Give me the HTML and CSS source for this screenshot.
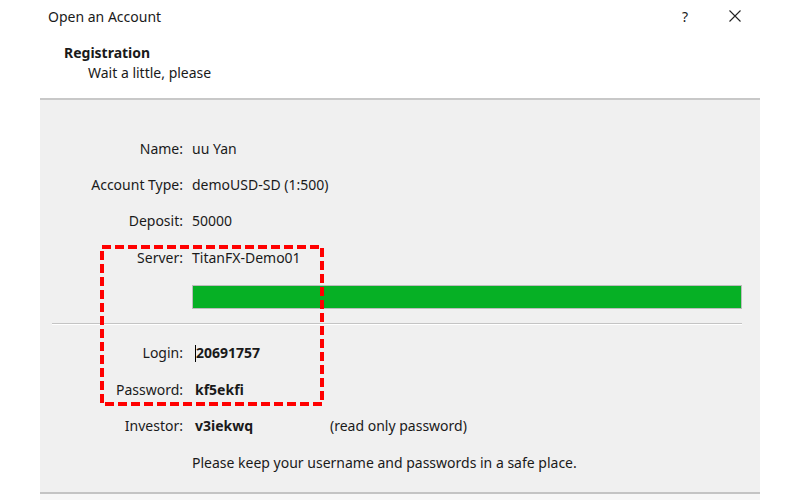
FILE: index.html
```html
<!DOCTYPE html>
<html>
<head>
<meta charset="utf-8">
<link rel="stylesheet" href="styles.css">
</head>
<body>
<div class="titlebar">
  <span class="title">Open an Account</span>
  <span class="tbtn help">?</span>
  <span class="tbtn close">
    <svg width="14" height="14" viewBox="0 0 14 14"><path d="M1.5 1.5 L12.5 12.5 M12.5 1.5 L1.5 12.5" stroke="#222" stroke-width="1.1" fill="none"/></svg>
  </span>
</div>
<div class="header">
  <div class="h-title">Registration</div>
  <div class="h-sub">Wait a little, please</div>
</div>
<div class="panel">
  <div class="grid">
    <div class="lbl">Name:</div><div class="val">uu Yan</div>
    <div class="lbl">Account Type:</div><div class="val">demoUSD-SD (1:500)</div>
    <div class="lbl">Deposit:</div><div class="val">50000</div>
    <div class="lbl">Server:</div><div class="val">TitanFX-Demo01</div>
  </div>
  <div class="progress"><div class="fill"></div></div>
  <div class="sep"></div>
  <div class="grid grid2">
    <div class="lbl">Login:</div><div class="val b"><span class="caret"></span>20691757</div>
    <div class="lbl">Password:</div><div class="val b pw">kf5ekfi</div>
    <div class="lbl">Investor:</div><div class="val inv"><span class="b">v3iekwq</span><span class="ro">(read only password)</span></div>
    <div class="lbl"></div><div class="val">Please keep your username and passwords in a safe place.</div>
  </div>
</div>
<div class="footer"></div>
<svg class="highlight" width="224" height="161" viewBox="0 0 224 161">
  <rect x="2" y="2" width="220" height="157" fill="none" stroke="#ff0000" stroke-width="4" stroke-dasharray="9 4"/>
</svg>
</body>
</html>
```
FILE: styles.css
```css
html, body {
  margin: 0;
  padding: 0;
  background: #ffffff;
  width: 800px;
  height: 500px;
  overflow: hidden;
}
body {
  font-family: "Noto Sans", "Open Sans", sans-serif;
  font-size: 14px;
  color: #1a1a1a;
  position: relative;
}
.titlebar {
  height: 32px;
  display: flex;
  align-items: center;
  padding-left: 48px;
}
.title { flex: 1; }
.tbtn {
  width: 50px;
  display: flex;
  justify-content: center;
  align-items: center;
}
.help { font-size: 14px; }
.close { margin-right: 40px; }
.header {
  height: 66px;
  padding-left: 64px;
  box-sizing: border-box;
  padding-top: 11px;
}
.h-title { font-weight: bold; line-height: 20px; }
.h-sub { padding-left: 24px; line-height: 20px; }
.panel {
  margin: 0 40px;
  background: #f0f0f0;
  border-top: 2px solid #c8c8c8;
  border-bottom: 2px solid #c4c4c4;
  height: 396px;
  box-sizing: border-box;
  padding-top: 30px;
}
.grid {
  display: grid;
  grid-template-columns: 143px 1fr;
  column-gap: 9px;
  grid-auto-rows: 36.3px;
  align-items: center;
}
.grid2 { grid-auto-rows: 36.7px; }
.lbl { text-align: right; }
.b { font-weight: bold; }
.val.b, .pw { padding-left: 3px; }
.caret {
  display: inline-block;
  width: 1px;
  height: 17px;
  background: #000;
  vertical-align: middle;
}
.inv { display: flex; padding-left: 3px; }
.inv .b { width: 135px; }
.progress {
  margin: 10px 18px 0 152px;
  height: 24px;
  box-sizing: border-box;
  border: 1px solid #bcbcbc;
  background: #e6e6e6;
}
.fill { height: 100%; width: 100%; background: #06b025; }
.sep {
  margin: 14px 18px 9px 12px;
  height: 1px;
  background: #c4c4c4;
  border-bottom: 1px solid #fff;
}
.footer {
  margin: 0 40px;
  height: 6px;
  background: #f7f7f7;
}
.highlight {
  position: absolute;
  left: 100px;
  top: 245px;
}
```
